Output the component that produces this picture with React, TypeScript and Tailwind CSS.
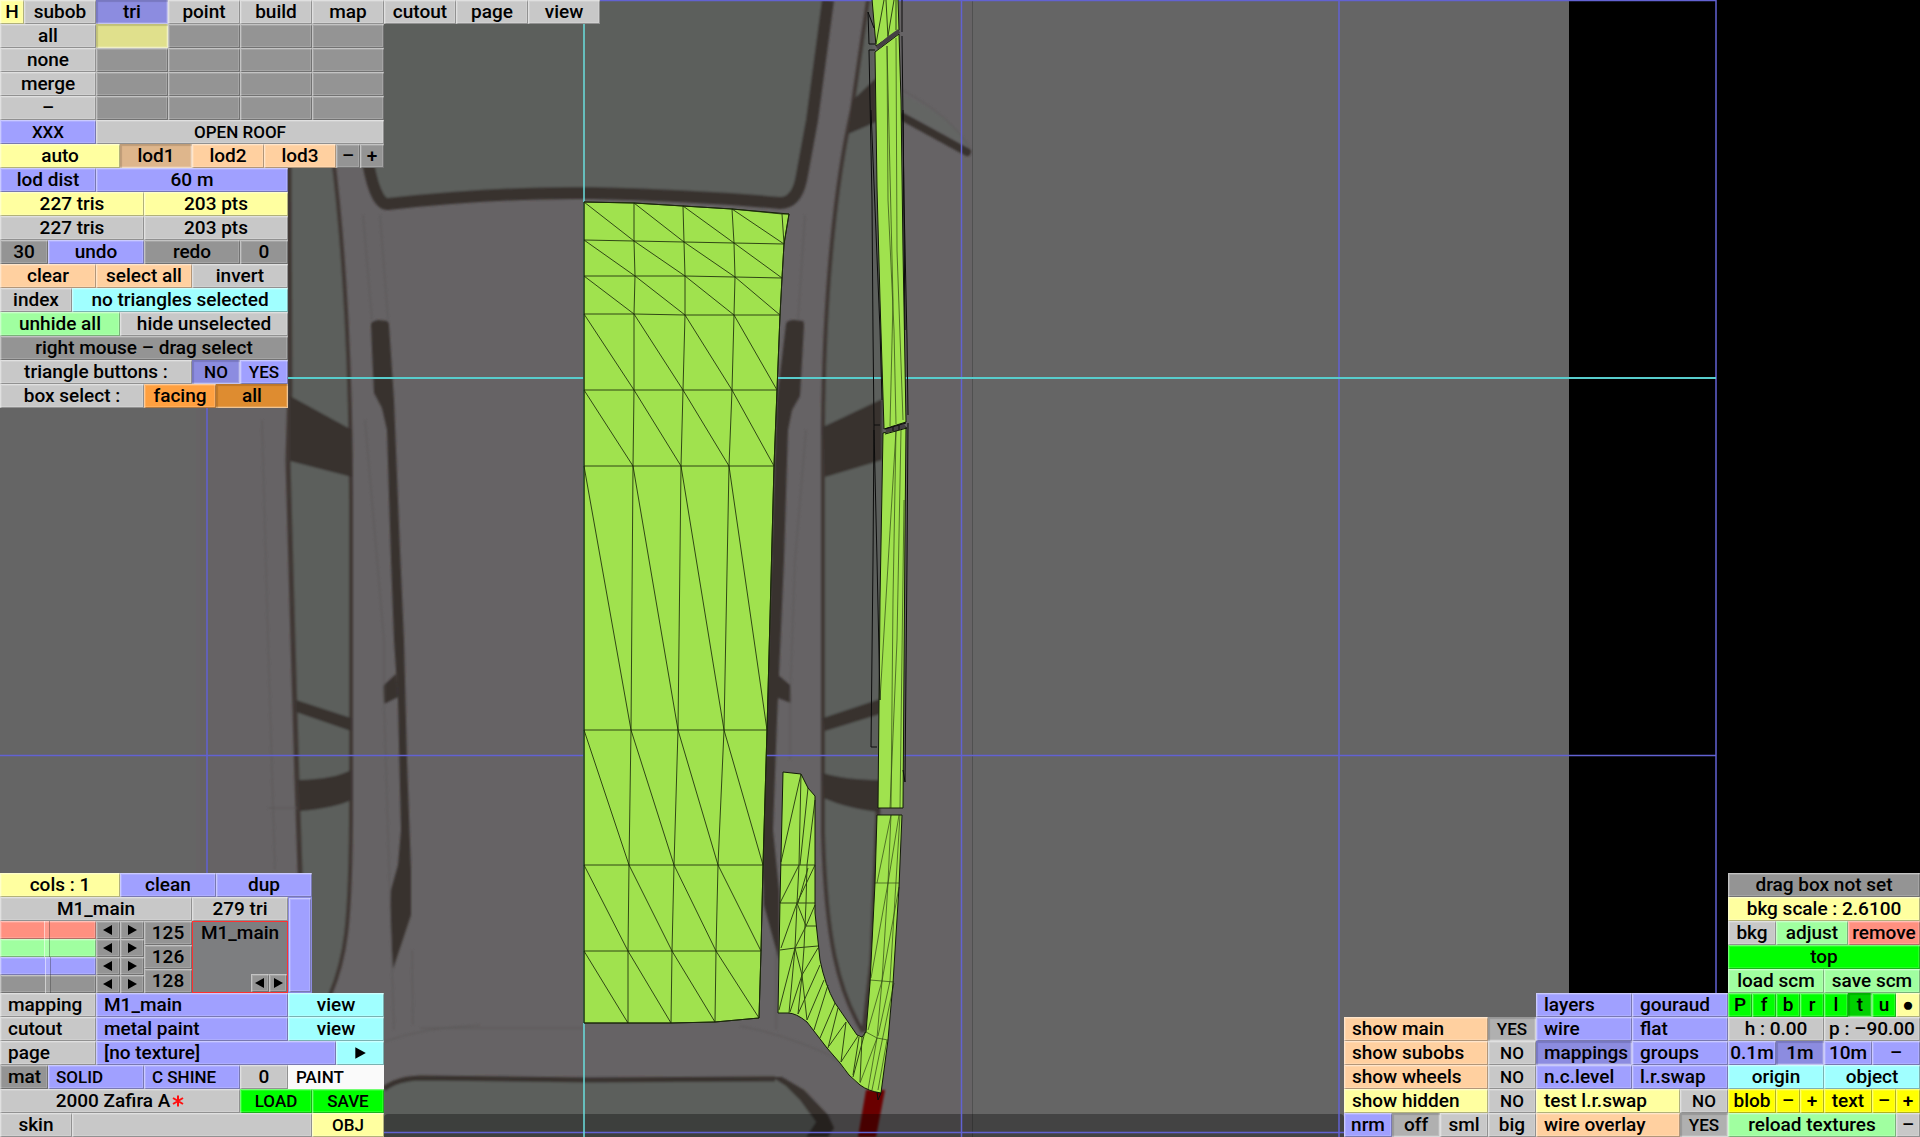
import { useState } from "react";
import clsx from "clsx";

const TONES = {
  grey: "bg-[#c8c8c8]",
  greyOn: "bg-[#b0b0b0]",
  dark: "bg-[#949494]",
  blue: "bg-[#a0a0ff]",
  blueOn: "bg-[#8c8ce0]",
  yellow: "bg-[#ffffa0]",
  yellowOn: "bg-[#e0e08c]",
  peach: "bg-[#ffd0a0]",
  peachOn: "bg-[#deb68c]",
  orange: "bg-[#ffa040]",
  orangeOn: "bg-[#de8c30]",
  cyan: "bg-[#a0ffff]",
  mint: "bg-[#a0ffa0]",
  lime: "bg-[#00ff00]",
  limeOn: "bg-[#00d000]",
  bright: "bg-[#ffff00]",
  red: "bg-[#ff9080]",
} as const;
type Tone = keyof typeof TONES;

const RAISED =
  "shadow-[inset_1px_1px_0_rgba(255,255,255,0.35),inset_2px_2px_0_rgba(255,255,255,0.15),inset_-1px_-1px_0_rgba(0,0,0,0.3),inset_-2px_-2px_0_rgba(255,255,255,0.15)]";
const SUNKEN =
  "shadow-[inset_2px_2px_1px_rgba(0,0,0,0.14),inset_-1px_-1px_0_rgba(255,255,255,0.4),inset_-2px_-2px_0_rgba(255,255,255,0.15)]";
const CAPS = "text-[17px] font-medium";
const BODY = "text-[19px] font-medium";

// Widths in 24px grid units.
const WIDTHS: Record<number, string> = {
  1: "w-6",
  2: "w-12",
  3: "w-18",
  4: "w-24",
  5: "w-30",
  6: "w-36",
  7: "w-42",
  8: "w-48",
  9: "w-54",
  10: "w-60",
  12: "w-72",
};

interface CellProps {
  text: string;
  w: number;
  tone?: Tone;
  left?: boolean;
  readout?: boolean;
  label?: string;
}

function Cell({ text, w, tone = "grey", left, readout, label }: CellProps) {
  const pressed = tone.endsWith("On");
  const caps = /^[A-Z ]{2,}$/.test(text);
  const cls = clsx(
    "flex h-6 shrink-0 items-center whitespace-nowrap leading-6 text-black",
    left ? "justify-start pl-2" : "justify-center",
    WIDTHS[w],
    TONES[tone],
    caps ? CAPS : BODY,
    pressed ? SUNKEN : RAISED
  );
  if (readout) return <div className={cls}>{text}</div>;
  return (
    <button type="button" aria-label={label} aria-pressed={pressed || undefined} className={cls}>
      {text}
    </button>
  );
}

type Def = [string, number, Tone?, ("l" | "r" | "lr")?];

function Row({ cells }: { cells: Def[] }) {
  return (
    <div className="flex">
      {cells.map(([text, w, tone, flags], i) => (
        <Cell
          key={i}
          text={text}
          w={w}
          tone={tone}
          left={flags?.includes("l")}
          readout={flags?.includes("r")}
          label={text ? undefined : "slot"}
        />
      ))}
    </div>
  );
}

function Rows({ rows }: { rows: Def[][] }) {
  return (
    <>
      {rows.map((r, i) => (
        <Row key={i} cells={r} />
      ))}
    </>
  );
}

const TOP_ROWS: Def[][] = [
  [["H", 1, "yellow"], ["subob", 3], ["tri", 3, "blueOn"], ["point", 3], ["build", 3], ["map", 3], ["cutout", 3], ["page", 3], ["view", 3]],
  [["all", 4], ["", 3, "yellowOn"], ["", 3, "dark"], ["", 3, "dark"], ["", 3, "dark"]],
  [["none", 4], ["", 3, "dark"], ["", 3, "dark"], ["", 3, "dark"], ["", 3, "dark"]],
  [["merge", 4], ["", 3, "dark"], ["", 3, "dark"], ["", 3, "dark"], ["", 3, "dark"]],
  [["–", 4], ["", 3, "dark"], ["", 3, "dark"], ["", 3, "dark"], ["", 3, "dark"]],
  [["XXX", 4, "blue"], ["OPEN ROOF", 12]],
  [["auto", 5, "yellow"], ["lod1", 3, "peachOn"], ["lod2", 3, "peach"], ["lod3", 3, "peach"], ["–", 1, "dark"], ["+", 1, "dark"]],
  [["lod dist", 4, "blue"], ["60 m", 8, "blue"]],
  [["227 tris", 6, "yellow", "r"], ["203 pts", 6, "yellow", "r"]],
  [["227 tris", 6, "grey", "r"], ["203 pts", 6, "grey", "r"]],
  [["30", 2, "dark", "r"], ["undo", 4, "blue"], ["redo", 4, "dark"], ["0", 2, "dark", "r"]],
  [["clear", 4, "peach"], ["select all", 4, "peach"], ["invert", 4]],
  [["index", 3], ["no triangles selected", 9, "cyan", "r"]],
  [["unhide all", 5, "mint"], ["hide unselected", 7]],
  [["right mouse – drag select", 12, "dark", "r"]],
  [["triangle buttons :", 8, "grey", "r"], ["NO", 2, "blueOn"], ["YES", 2, "blue"]],
  [["box select :", 6, "grey", "r"], ["facing", 3, "orange"], ["all", 3, "orangeOn"]],
];

const MATERIAL_ROWS: Def[][] = [
  [["mapping", 4, "grey", "lr"], ["M1_main", 8, "blue", "l"], ["view", 4, "cyan"]],
  [["cutout", 4, "grey", "lr"], ["metal paint", 8, "blue", "l"], ["view", 4, "cyan"]],
];

const SHOW_ROWS: Def[][] = [
  [["show main", 6, "peach", "l"], ["YES", 2, "greyOn"]],
  [["show subobs", 6, "peach", "l"], ["NO", 2]],
  [["show wheels", 6, "peach", "l"], ["NO", 2]],
  [["show hidden", 6, "yellow", "l"], ["NO", 2]],
  [["nrm", 2, "blue"], ["off", 2, "greyOn"], ["sml", 2], ["big", 2]],
];

const RENDER_ROWS: Def[][] = [
  [["layers", 4, "blue", "l"], ["gouraud", 4, "blue", "l"]],
  [["wire", 4, "blue", "l"], ["flat", 4, "blue", "l"]],
  [["mappings", 4, "blueOn", "l"], ["groups", 4, "blue", "l"]],
  [["n.c.level", 4, "blue", "l"], ["l.r.swap", 4, "blue", "l"]],
  [["test l.r.swap", 6, "yellow", "l"], ["NO", 2]],
  [["wire overlay", 6, "peach", "l"], ["YES", 2, "greyOn"]],
];

const VIEW_ROWS: Def[][] = [
  [["drag box not set", 8, "dark", "r"]],
  [["bkg scale : 2.6100", 8, "yellow"]],
  [["bkg", 2], ["adjust", 3, "mint"], ["remove", 3, "red"]],
  [["top", 8, "lime"]],
  [["load scm", 4, "mint"], ["save scm", 4, "mint"]],
  [["P", 1, "lime"], ["f", 1, "lime"], ["b", 1, "lime"], ["r", 1, "lime"], ["l", 1, "lime"], ["t", 1, "limeOn"], ["u", 1, "lime"], ["●", 1, "yellow"]],
  [["h : 0.00", 4], ["p : –90.00", 4]],
  [["0.1m", 2, "blue"], ["1m", 2, "blueOn"], ["10m", 2, "blue"], ["–", 2, "blue"]],
  [["origin", 4, "cyan"], ["object", 4, "cyan"]],
  [["blob", 2, "bright"], ["–", 1, "bright"], ["+", 1, "bright"], ["text", 2, "bright"], ["–", 1, "bright"], ["+", 1, "bright"]],
  [["reload textures", 7, "mint"], ["–", 1]],
];

interface ArrowProps {
  dir: "left" | "right";
  className: string;
  label: string;
  large?: boolean;
}

function Arrow({ dir, className, label, large }: ArrowProps) {
  return (
    <button type="button" aria-label={label} className={clsx("flex items-center justify-center", RAISED, className)}>
      <svg viewBox="0 0 12 12" className={large ? "size-3.5" : "size-3"} aria-hidden="true">
        <path d={dir === "left" ? "M10 1V11L1 6Z" : "M2 1V11L11 6Z"} fill="#000" />
      </svg>
    </button>
  );
}

const CHANNELS: { name: string; tone: Tone; value: number }[] = [
  { name: "red", tone: "red", value: 125 },
  { name: "green", tone: "mint", value: 126 },
  { name: "blue", tone: "blue", value: 128 },
  { name: "brightness", tone: "dark", value: 128 },
];

function ColourPanel() {
  const [values, setValues] = useState(CHANNELS.map((c) => c.value));
  const set = (i: number, v: number) => setValues(values.map((o, k) => (k === i ? v : o)));
  return (
    <div className="flex">
      <div className="flex flex-col">
        <Row cells={[["M1_main", 8], ["279 tri", 4, "grey", "r"]]} />
        <div className="flex">
          <div className="flex w-36 flex-col">
            {CHANNELS.map((c, i) => (
              <div key={c.name} className="flex h-[18px]">
                <input
                  type="range"
                  min={0}
                  max={255}
                  value={values[i]}
                  aria-label={c.name}
                  onChange={(e) => set(i, Number(e.target.value))}
                  className={clsx(
                    "m-0 h-[18px] w-24 appearance-none [&::-webkit-slider-thumb]:h-[18px] [&::-webkit-slider-thumb]:w-1.5 [&::-webkit-slider-thumb]:appearance-none [&::-webkit-slider-thumb]:border-x [&::-webkit-slider-thumb]:border-l-white/50 [&::-webkit-slider-thumb]:border-r-black/30 [&::-webkit-slider-thumb]:bg-white/10",
                    TONES[c.tone],
                    RAISED
                  )}
                />
                <Arrow dir="left" label={`${c.name} down`} className="w-6 bg-[#949494]" />
                <Arrow dir="right" label={`${c.name} up`} className="w-6 bg-[#949494]" />
              </div>
            ))}
          </div>
          <div className="flex flex-col">
            {values.slice(0, 3).map((v, i) => (
              <Cell key={i} text={String(v)} w={2} tone="dark" readout />
            ))}
          </div>
          <div className="flex h-18 w-24 flex-col justify-between border border-[#ff3030] bg-[#7d7e80]">
            <div className={clsx("text-center leading-[22px]", BODY)}>M1_main</div>
            <div className="flex justify-end">
              <Arrow dir="left" label="previous" className="size-[18px] bg-[#949494]" />
              <Arrow dir="right" label="next" className="size-[18px] bg-[#949494]" />
            </div>
          </div>
        </div>
      </div>
      <div className={clsx("w-6 border border-[#8c8ce0] bg-[#a0a0ff]", RAISED)} />
    </div>
  );
}

// Roof mesh vertices, front to back.
const ROOF: [number, number][][] = [
  [[584, 202], [634, 203], [683, 206], [732, 209], [782, 214]],
  [[584, 240], [634, 241], [684, 242], [734, 243], [784, 244]],
  [[584, 276], [635, 276], [685, 276], [735, 277], [782, 278]],
  [[584, 314], [634, 314], [685, 315], [734, 315], [780, 315]],
  [[584, 390], [634, 390], [683, 390], [732, 390], [777, 390]],
  [[584, 466], [633, 466], [681, 466], [729, 466], [774, 466]],
  [[584, 730], [631, 730], [678, 730], [724, 730], [767, 730]],
  [[584, 865], [629, 865], [674, 865], [718, 865], [763, 865]],
  [[584, 951], [628, 951], [672, 951], [716, 951], [761, 951]],
  [[584, 1023], [628, 1023], [671, 1023], [715, 1022], [759, 1018]],
];

function roofLines() {
  let d = "";
  ROOF.forEach((row, i) => {
    d += "M" + row.map((p) => p.join(" ")).join("L");
    const next = ROOF[i + 1];
    if (!next) return;
    row.forEach((p, j) => {
      d += `M${p.join(" ")}L${next[j].join(" ")}`;
      if (j < 4) d += `M${p.join(" ")}L${next[j + 1].join(" ")}`;
    });
  });
  return d + "M782 214L789 214L784 244";
}

const ROOF_OUTLINE =
  "M584 202L634 203L683 206L732 209L789 214L784 244L782 278L780 315L777 390L774 466L767 730L763 865L761 951L759 1018L715 1022L671 1023H584Z";

function Viewport() {
  return (
    <svg
      viewBox="0 0 1920 1137"
      preserveAspectRatio="xMinYMin slice"
      className="absolute inset-0 h-full w-full"
      role="img"
      aria-label="top view"
    >
      <defs>
        <filter id="soft" x="-5%" y="-5%" width="110%" height="110%">
          <feGaussianBlur stdDeviation="1" />
        </filter>
      </defs>
      <rect width="1569" height="1137" fill="#656565" />
      <rect x="196" width="776" height="1137" fill="#666365" />
      <path d="M972.500 0V1137" stroke="#505050" />
      <g filter="url(#soft)" fill="none">
        <g fill="#5c5f5b">
          <path d="M345 0L366 160Q374 205 390 204Q500 192 590 193Q690 195 780 203Q796 203 801 180L812 120L828 0Z" />
          <path d="M289 140L290 390L288 460L293 640L297 780L301 900L305 1000L330 995C342 965 351 930 351 800V500C351 380 345 250 332 150Z" />
          <path d="M868 0L852 110C836 180 824 290 823 430V833C826 940 838 990 866 1030L880 800L884 430L872 0Z" />
          <path d="M384 1087Q396 1078 420 1078L775 1079C800 1083 818 1103 828 1122L815 1137H384Z" />
          <path d="M903 95Q950 115 970 148L903 112Z" fill="#636563" />
        </g>
        <g stroke="#403835" strokeWidth="4">
          <path d="M332 150C345 250 351 380 351 500V800C351 930 345 960 330 995" />
          <path d="M289 140L290 390L288 460L293 640L297 780L301 900" strokeWidth="5" />
          <path d="M868 0L852 110C836 180 824 290 823 430V833C826 940 838 990 863 1032" />
          <path d="M878 810L872 960L864 1032" strokeWidth="5" />
        </g>
        <g stroke="#38322f">
          <path d="M366 150Q374 205 388 204Q500 192 590 193Q690 195 780 203Q796 203 801 180L812 120L828 0" strokeWidth="12" />
          <path d="M384 1089Q396 1079 420 1078L590 1080L775 1079" strokeWidth="5" />
          <path d="M772 1077H782L804 1090L828 1115L834 1128L828 1137H806L816 1122L800 1100L786 1086Z" fill="#38322f" stroke="none" />
          <path d="M903 117L967 152" strokeWidth="8" strokeLinecap="round" />
        </g>
        <g fill="#38322f">
          <path d="M290 396L352 430V477L290 461Z" />
          <path d="M296 700L351 718V731L296 712Z" />
          <path d="M298 780Q335 779 351 770V800Q335 808 300 811Z" />
          <path d="M371 324Q372 321 378 320L387 321Q389 322 389 325L394 400L400 550L404 640L407 760L411 870V915L393 969L390 910L391 890L398 865L401 830L398 700L394 640L391 560L387 430L382 408L374 393L372 350Z" />
          <path d="M383 686L396 674L398 697L384 704Z" />
          <path d="M786 324Q787 320 794 320L803 321Q804 322 804 326L800 396L792 410L788 430L784 560L777 720L773 830L779 890V960L764 905L762 850L766 720L777 400Z" />
          <path d="M777 674L791 686V703L778 698Z" />
          <path d="M853 100L876 78V122L848 134Z" />
          <path d="M823 427L882 399V460L825 477Z" />
          <path d="M823 718L880 699V714L825 731Z" />
          <path d="M823 773Q845 780 880 780V812Q845 808 824 798Z" />
        </g>
        <path d="M866 1090L885 1090L876 1137H858Z" fill="#6a0606" />
        <g stroke="#5b5858">
          <path d="M363 215L372 320M380 215L388 320M262 420L268 640L275 870M365 420L384 640V700L390 900L394 1030M412 950L413 1025" />
          <path d="M384 1042Q420 1028 480 1025M420 1028H584M740 1026Q780 1033 830 1055L860 1080M902 90Q950 115 970 148" />
          <path d="M805 215L798 320M806 430L795 560L790 700V760M776 1030V950M268 808H297" />
        </g>
      </g>
      <path d="M384 1118Q384 1114 388 1114H1340Q1344 1114 1344 1118V1137H384Z" fill="#000" opacity="0.33" />

      <g stroke="#6262d2" strokeWidth="1.500">
        <path d="M0 0.500H1716M0 755.500H1716M0 1132.500H1716" />
        <path d="M207 0V1137M961.500 0V1137M1339 0V1137M1716 0V1137" />
      </g>
      <path d="M0 378H1716" stroke="#58cccc" strokeWidth="2" />
      <path d="M584 0V1137" stroke="#6adede" strokeWidth="1.500" />

      <g fill="#a0e24e" stroke="#121a08" strokeWidth="1">
        <path d={ROOF_OUTLINE} />
        <path d="M872 -1L898 -1L899 30L876 46Z" />
        <path d="M875 52L899 34L901 100L903 250L906 422L884 429L880 300L877 187Z" />
        <path d="M883 433L906 427L905 533L903 808L878 808L880 600Z" />
        <path d="M877 815L902 815L899 887L893 983L888 1040L881 1093Q868 1091 860 1085Q848 1076 840 1063L827 1048L807 1022Q796 1013 788 1013H778L780 900L783 772L801 774L808 788L815 796V913L820 960Q825 985 835 1003L857 1035L862 1037L866 1032L870 983L875 883Z" />
      </g>
      <g fill="none" stroke="#1c2b0b" strokeWidth="1" opacity="0.85">
        <path d={roofLines()} />
        <path d="M884 0L876 44M886 0L888 38M894 0L888 36M896 0V30" />
        <path d="M887 46L888 200L894 330L896 424M896 38L897 250L903 420M887 46L893 300L890 426" opacity="0.7" />
        <path d="M896 430L893 600L891 808M896 430L880 700M901 430L897 640L890 808M904 500L900 808" opacity="0.7" />
        <path d="M875 883H899M870 980L894 982M891 815L888 883L882 981L877 1038M900 815L890 981L878 1036M899 815L888 883M877 883L891 815M871 978L888 883M899 887L882 981M868 1030L882 981M866 1032L877 1038L888 1040M894 983L872 1090M887 1040L878 1090M877 1038L860 1083M877 1038L868 1090" opacity="0.7" />
        <path d="M781 865H815M780 903H815M780 950L795 948L818 946M801 774L799 865L797 903L795 948L789 1013M801 774L781 862M808 788L800 865M815 800L807 865M807 865L806 903L804 948L802 975M799 865L780 903M815 865L797 903L806 926H816M808 868L798 903M797 903L781 948M815 905L806 926L795 948M795 948L779 1010M795 948L802 975L807 1020M818 948L802 975L790 1012M820 965L798 1014M802 975L798 1014M824 980L807 1020M828 985L814 1030M835 1003L820 1038M838 1008L828 1048M846 1022L829 1046M846 1022L841 1062M858 1036L841 1062M859 1037L853 1075M862 1037L860 1082M865 1032L853 1077" />
      </g>
      <g fill="none" stroke="#0c0c0c" strokeWidth="1">
        <path d="M868 12L874 28M868 12L869 44H875M869 50L872 200L873 333L874 425H880M869 50H875M871 110L880 330L882 400M874 425L873 560L871 747H877M874 430L877 560L880 700" />
        <path d="M902 0V32M902 36L904 200L907 340L908 415M903 110L905 330M908 423L907 560L905 782L903 770" />
        <path d="M877 48L889 38L899 31" stroke="#454044" strokeWidth="4" />
        <path d="M886 431L905 426" stroke="#454044" strokeWidth="4" />
        <path d="M885 434L907 428M885 429L906 423M893 431V427M899 430V425" />
        <path d="M881 1093L878 1100L877 1092" />
      </g>
    </svg>
  );
}

export default function App() {
  return (
    <main className="relative flex min-h-screen w-full flex-col justify-between overflow-hidden bg-black font-['Roboto',sans-serif] text-black">
      <Viewport />
      <section className="relative flex flex-col items-start" aria-label="editor tools">
        <Rows rows={TOP_ROWS} />
      </section>
      <div className="relative flex items-end justify-between">
        <section className="flex flex-col items-start" aria-label="material">
          <Row cells={[["cols : 1", 5, "yellow"], ["clean", 4, "blue"], ["dup", 4, "blue"]]} />
          <ColourPanel />
          <Rows rows={MATERIAL_ROWS} />
          <div className="flex">
            <Row cells={[["page", 4, "grey", "lr"], ["[no texture]", 10, "blue", "l"]]} />
            <Arrow dir="right" label="next texture" className="w-12 bg-[#a0ffff]" large />
          </div>
          <div className="flex">
            <Row cells={[["mat", 2, "dark", "l"], ["SOLID", 4, "blue", "l"], ["C SHINE", 4, "blue", "l"], ["0", 2]]} />
            <input
              type="text"
              aria-label="material name"
              defaultValue="PAINT"
              className={clsx("h-6 w-24 bg-[#fafafa] pl-2 leading-6", CAPS)}
            />
          </div>
          <div className="flex">
            <div className={clsx("flex h-6 w-60 items-center justify-center bg-[#c8c8c8] leading-6", BODY, RAISED)}>
              2000 Zafira A
              <svg viewBox="0 0 12 12" className="ml-0.5 size-3" aria-hidden="true">
                <path d="M6 0.500V11.500M1 3L11 9M11 3L1 9" stroke="#ff1010" strokeWidth="2" />
              </svg>
            </div>
            <Row cells={[["LOAD", 3, "lime"], ["SAVE", 3, "lime"]]} />
          </div>
          <Row cells={[["skin", 3], ["", 10, "grey", "r"], ["OBJ", 3, "yellow"]]} />
        </section>
        <div className="flex items-end">
          <section className="flex flex-col" aria-label="visibility">
            <Rows rows={SHOW_ROWS} />
          </section>
          <section className="flex flex-col" aria-label="render mode">
            <Rows rows={RENDER_ROWS} />
          </section>
          <section className="flex flex-col" aria-label="view">
            <Rows rows={VIEW_ROWS} />
          </section>
        </div>
      </div>
    </main>
  );
}
